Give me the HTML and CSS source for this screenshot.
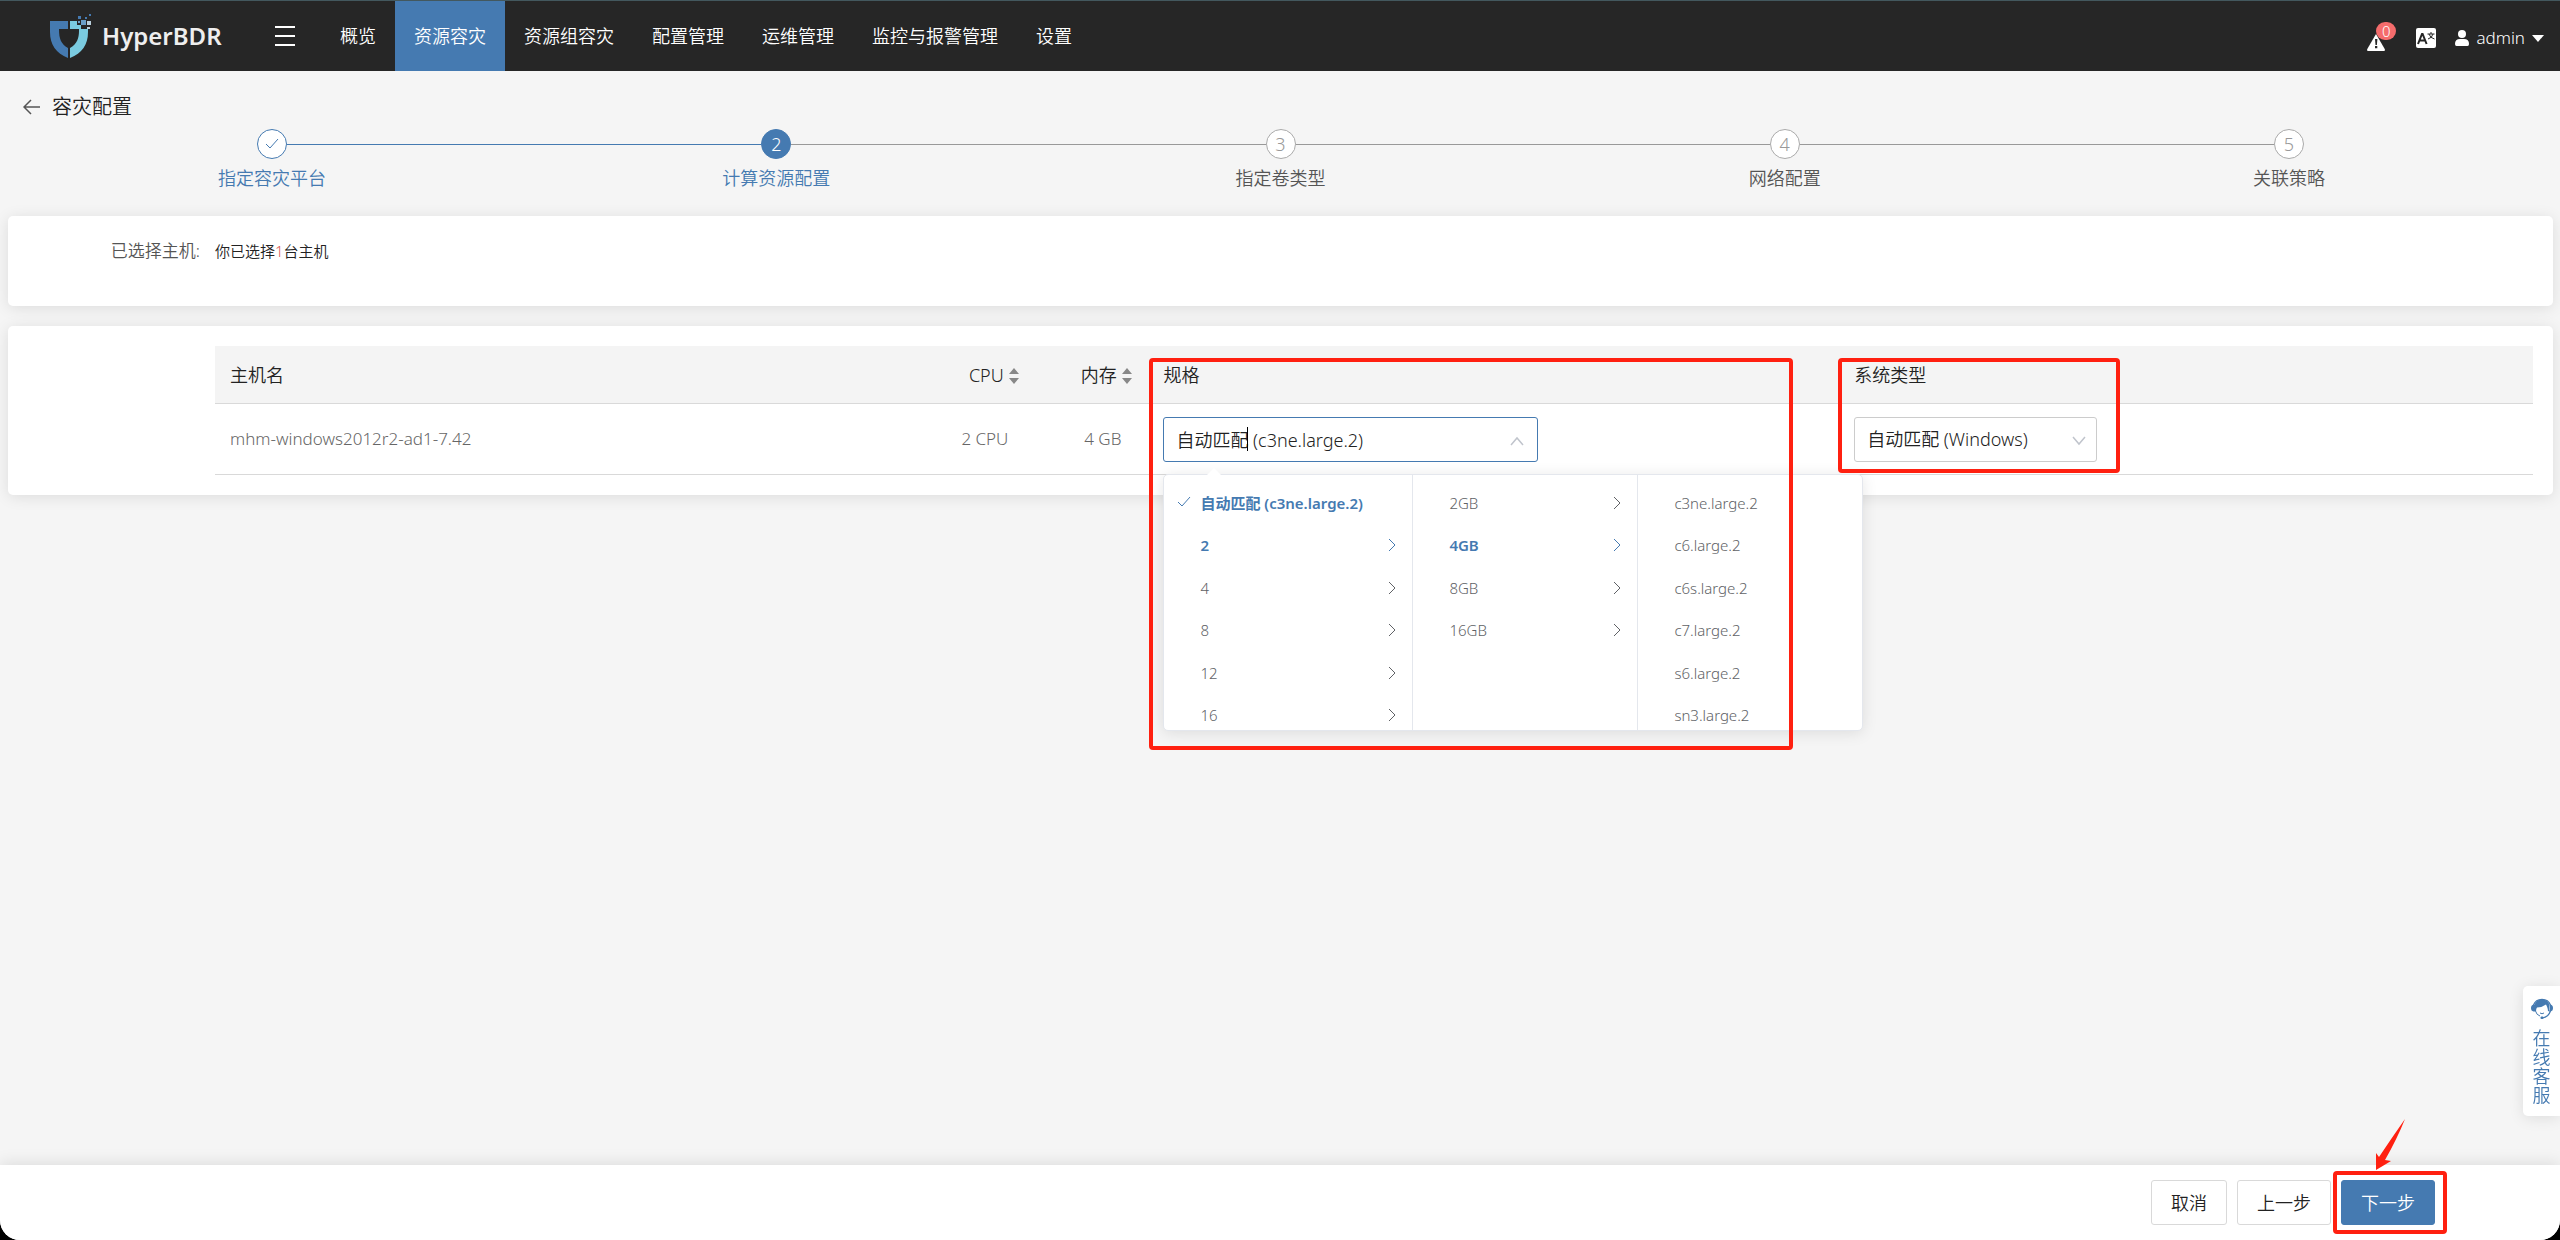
FILE: index.html
```html
<!DOCTYPE html>
<html lang="zh-CN">
<head>
<meta charset="utf-8">
<title>HyperBDR - 容灾配置</title>
<link rel="stylesheet" href="styles.css">
</head>
<body>
<svg class="sprite" aria-hidden="true">
  <symbol id="chev-right" viewBox="0 0 8 14"><path d="M1 1l6 6-6 6"/></symbol>
  <symbol id="chev-down" viewBox="0 0 14 10"><path d="M1 1l6 7 6-7"/></symbol>
  <symbol id="chev-up" viewBox="0 0 14 10"><path d="M1 9l6-7 6 7"/></symbol>
  <symbol id="check" viewBox="0 0 14 12"><path d="M1 6l4 4 8-9"/></symbol>
  <symbol id="sort" viewBox="0 0 10 16"><path d="M5 0l5 6H0zM5 16l5-6H0z"/></symbol>
</svg>
<div class="app">
  <header class="topbar">
    <a class="brand" href="#">
      <svg class="brand-mark" viewBox="0 0 42 44" aria-hidden="true">
        <path fill="#457ab1" d="M0 7h18v8H9c0 10 2 15 9 19v10C6 39 0 31 0 18z"/>
        <path fill="#7acbe0" d="M20 7h7v4h4v4h7v3c0 13-6 21-18 26V34c7-4 9-10 9-17v-2h-9z"/>
        <path fill="#457ab1" d="M28 2h3v3h-3zM35 3h2v2h-2zM39 0h2v2h-2z"/>
        <path fill="#6a9fc8" d="M31 6h5v5h-5zM28 7h2v2h-2z"/>
        <path fill="#b9cfdc" d="M37 7h4v4h-4zM37 13h3v2h-3z"/>
      </svg>
      <span class="brand-name">HyperBDR</span>
    </a>
    <button class="menu-toggle" type="button" aria-label="菜单"><i></i><i></i><i></i></button>
    <nav class="nav">
      <a href="#">概览</a>
      <a href="#" class="active">资源容灾</a>
      <a href="#">资源组容灾</a>
      <a href="#">配置管理</a>
      <a href="#">运维管理</a>
      <a href="#">监控与报警管理</a>
      <a href="#">设置</a>
    </nav>
    <div class="tools">
      <button class="alarm" type="button" aria-label="报警">
        <svg viewBox="0 0 18 17" width="18" height="17"><path fill="#fff" d="M9 0l9 15.500q0 1.500-1 1.500H1q-1 0-1-1.500z"/><path fill="#262626" d="M8 5h2.400l-.5 6H8.500zM8 12h2.300v2.200H8z"/></svg>
        <span class="badge">0</span>
      </button>
      <button class="lang" type="button" aria-label="语言">
        <svg viewBox="0 0 20 20" width="20" height="20"><rect width="20" height="20" rx="2" fill="#fff"/><g fill="none" stroke="#262626"><path stroke-width="2" d="M2 16L6 6h.6l4 10M3.500 12.500h6"/><path d="M11.500 6h7M15 4v2M12 11q4-1 5-5M13 6q1 4 5.500 5"/></g></svg>
      </button>
      <button class="user" type="button">
        <svg viewBox="0 0 14 16" width="14" height="16"><circle cx="7" cy="4" r="4" fill="#fff"/><path fill="#fff" d="M0 14q0-5 5-5h4q5 0 5 5 0 2-1.500 2h-11Q0 16 0 14z"/></svg>
        <span>admin</span>
        <svg class="user-caret" viewBox="0 0 12 7" width="12" height="7"><path fill="#fff" d="M0 0h12L6 7z"/></svg>
      </button>
    </div>
  </header>

  <main class="content">
    <div class="page-title">
      <a href="#" class="back" aria-label="返回"><svg viewBox="0 0 18 16" width="18" height="16"><path d="M17 8H1M8 1L1 8l7 7"/></svg></a>
      <h1>容灾配置</h1>
    </div>

    <ol class="steps">
      <li class="done"><span class="dot"><svg width="14" height="12"><use href="#check"/></svg></span><span class="step-label">指定容灾平台</span></li>
      <li class="current"><span class="dot">2</span><span class="step-label">计算资源配置</span></li>
      <li><span class="dot">3</span><span class="step-label">指定卷类型</span></li>
      <li><span class="dot">4</span><span class="step-label">网络配置</span></li>
      <li><span class="dot">5</span><span class="step-label">关联策略</span></li>
    </ol>

    <section class="card selected">
      <span class="field-label">已选择主机:</span>
      <span class="field-value">你已选择<em>1</em>台主机</span>
    </section>

    <section class="card hosts">
      <table>
        <colgroup><col class="c-name"><col class="c-num"><col class="c-num"><col class="c-spec"><col></colgroup>
        <thead>
          <tr>
            <th>主机名</th>
            <th class="num">CPU <svg width="10" height="16"><use href="#sort"/></svg></th>
            <th class="num">内存 <svg width="10" height="16"><use href="#sort"/></svg></th>
            <th class="ctl"><label for="spec">规格</label></th>
            <th class="ctl"><label for="os">系统类型</label></th>
          </tr>
        </thead>
        <tbody>
          <tr>
            <td>mhm-windows2012r2-ad1-7.42</td>
            <td class="num">2 CPU</td>
            <td class="num">4 GB</td>
            <td class="ctl">
              <div class="picker spec">
                <input id="spec" type="text" role="combobox" aria-expanded="true" aria-controls="spec-menu" value="自动匹配 (c3ne.large.2)">
                <span class="text-cursor"></span>
                <svg class="arrow" width="14" height="10"><use href="#chev-up"/></svg>
                <div class="menu" id="spec-menu">
                  <div class="menu-body">
                    <div class="menu-col first">
                      <button type="button" class="on"><svg class="tick" width="14" height="12"><use href="#check"/></svg>自动匹配 (c3ne.large.2)</button>
                      <button type="button" class="on">2<svg class="more" width="8" height="14"><use href="#chev-right"/></svg></button>
                      <button type="button">4<svg class="more" width="8" height="14"><use href="#chev-right"/></svg></button>
                      <button type="button">8<svg class="more" width="8" height="14"><use href="#chev-right"/></svg></button>
                      <button type="button">12<svg class="more" width="8" height="14"><use href="#chev-right"/></svg></button>
                      <button type="button">16<svg class="more" width="8" height="14"><use href="#chev-right"/></svg></button>
                    </div>
                    <div class="menu-col">
                      <button type="button">2GB<svg class="more" width="8" height="14"><use href="#chev-right"/></svg></button>
                      <button type="button" class="on">4GB<svg class="more" width="8" height="14"><use href="#chev-right"/></svg></button>
                      <button type="button">8GB<svg class="more" width="8" height="14"><use href="#chev-right"/></svg></button>
                      <button type="button">16GB<svg class="more" width="8" height="14"><use href="#chev-right"/></svg></button>
                    </div>
                    <div class="menu-col">
                      <button type="button">c3ne.large.2</button>
                      <button type="button">c6.large.2</button>
                      <button type="button">c6s.large.2</button>
                      <button type="button">c7.large.2</button>
                      <button type="button">s6.large.2</button>
                      <button type="button">sn3.large.2</button>
                    </div>
                  </div>
                </div>
                <span class="mark mark-spec"></span>
              </div>
            </td>
            <td class="ctl">
              <div class="picker os">
                <select id="os"><option>自动匹配 (Windows)</option></select>
                <svg class="arrow" width="14" height="10"><use href="#chev-down"/></svg>
                <span class="mark mark-os"></span>
              </div>
            </td>
          </tr>
        </tbody>
      </table>
    </section>
  </main>

  <footer class="actions">
    <button type="button" class="btn">取消</button>
    <button type="button" class="btn">上一步</button>
    <div class="next">
      <button type="button" class="btn primary">下一步</button>
      <span class="mark mark-next"></span>
      <svg class="pointer" viewBox="0 0 30 52" width="30" height="52" aria-hidden="true"><path fill="#ff2010" d="M29 0Q21 20 9 41l6 1L0 51V34l3 4Q15 20 29 0z"/></svg>
    </div>
  </footer>
</div>

<a class="support" href="#">
  <svg viewBox="0 0 22 22" width="22" height="22" aria-hidden="true">
    <path fill="none" stroke="#457ab1" stroke-width="1.200" d="M2.500 8a9 8.500 0 0 1 17 0M19.500 14q-2 6-8 7"/>
    <path fill="#457ab1" d="M11 2.500c5 0 7.500 3 7.500 7v4l-1.500 1c0-3-1-5-2-7q-4 3-9 3-1 1-1 4l-1.500-1v-4c0-4 2.500-7 7.500-7zM2.500 7.500h1.500v7H2.500Q0 14 0 11t2.500-3.500zM19.500 7.500H18v7h1.500q2.500-.5 2.500-3.500t-2.500-3.500z"/>
    <rect fill="#457ab1" x="9.500" y="19.500" width="3" height="2.500" rx="1"/>
    <path fill="none" stroke="#457ab1" d="M4.500 14q1 4 4.500 5M9 16q2 1.500 4 0"/>
  </svg>
  <span>在线客服</span>
</a>
</body>
</html>
```
FILE: styles.css
```css
* { box-sizing: border-box; }

:root {
  --blue: #457ab1;
  --line: #d9d9d9;
  --mark: #ff2010;
}

body {
  margin: 0;
  background: #000;
  color: #222;
  font: 350 18px/24px "Noto Sans", "Noto Sans CJK SC", sans-serif;
}

a { color: inherit; text-decoration: none; }
button, input, select { font: inherit; color: inherit; }
button { cursor: pointer; }
.sprite { display: none; }

.app {
  display: flex;
  flex-direction: column;
  min-height: 100vh;
  overflow: hidden;
  background: #f5f5f5;
  border-radius: 0 0 20px 20px;
}

/* Top bar */
.topbar {
  display: flex;
  align-items: stretch;
  height: 71px;
  padding: 0 16px 0 50px;
  border-top: 1px solid #43585e;
  background: #262626;
  color: #fff;
}
.brand { display: flex; align-items: center; gap: 10px; width: 225px; }
.brand-mark { width: 42px; height: 44px; }
.brand-name { color: #eee; font-size: 24px; font-weight: 600; }
.menu-toggle {
  display: flex;
  flex-direction: column;
  justify-content: center;
  gap: 7px;
  width: 46px;
  padding: 0;
  border: 0;
  background: none;
}
.menu-toggle i { width: 20px; height: 2px; background: #fff; }
.nav { display: flex; }
.nav a { display: flex; align-items: center; padding: 0 19px; }
.nav .active { background: var(--blue); }
.tools { display: flex; align-items: center; margin-left: auto; }
.tools button {
  display: flex;
  align-items: center;
  padding: 0;
  border: 0;
  background: none;
}
.tools .alarm { position: relative; margin-right: 31px; padding-top: 12px; }
.badge {
  position: absolute;
  left: 9px;
  top: 0;
  width: 20px;
  height: 18px;
  border-radius: 9px;
  background: #f56c6c;
  font-size: 15px;
  line-height: 18px;
  text-align: center;
}
.tools .lang { margin-right: 19px; padding-top: 4px; }
.tools .user { gap: 7px; padding-top: 4px; font-size: 17px; }

/* Heading and steps */
.content { flex: 1; padding: 26px 7px 0 8px; }
.page-title { display: flex; align-items: center; gap: 11px; height: 20px; padding-left: 15px; }
.page-title h1 { margin: 0; font-size: 20px; font-weight: inherit; line-height: 20px; }
.back { display: flex; }
.back svg { fill: none; stroke: #555; stroke-width: 1.5; }

.steps {
  display: flex;
  margin: 12px 12px 26px;
  padding: 0;
  list-style: none;
  color: #555;
}
.steps li {
  position: relative;
  display: flex;
  flex: 1;
  flex-direction: column;
  align-items: center;
  gap: 7px;
}
.steps li:not(:last-child)::after {
  content: "";
  position: absolute;
  top: 15px;
  left: calc(50% + 15px);
  width: calc(100% - 30px);
  height: 1px;
  background: #999;
}
.dot {
  display: flex;
  align-items: center;
  justify-content: center;
  width: 30px;
  height: 30px;
  border: 1px solid #aaa;
  border-radius: 50%;
  background: #fff;
  color: #999;
}
.steps .done, .steps .current { color: var(--blue); }
.steps .done::after { background: var(--blue) !important; }
.done .dot { border-color: var(--blue); }
.done .dot svg { fill: none; stroke: var(--blue); }
.current .dot { border-color: var(--blue); background: var(--blue); color: #fff; }

/* Cards */
.card {
  margin-bottom: 20px;
  border-radius: 5px;
  background: #fff;
  box-shadow: 0 2px 15px rgba(0, 0, 0, .1);
}
.selected { display: flex; gap: 15px; min-height: 90px; padding: 20px 0; line-height: 30px; }
.field-label { width: 192px; color: #555; font-size: 17px; text-align: right; }
.field-value { font-size: 15px; }
.field-value em { color: #d9534f; font-style: normal; }

.hosts { padding: 20px 20px 20px 207px; }
table { width: 100%; border-collapse: separate; border-spacing: 0; table-layout: fixed; }
th, td { padding: 0 15px; border-bottom: 1px solid var(--line); font-weight: inherit; text-align: left; }
th { height: 58px; background: #f4f4f4; }
td { height: 71px; color: #666; font-size: 17px; }
th svg { margin-left: 1px; fill: #888; vertical-align: -2px; }
.num { text-align: right; }
th.num { padding-right: 4px; }
th.ctl, td.ctl { padding-left: 27px; }
.c-name { width: 30%; }
.c-num { width: 113px; }
.c-spec { width: 29.8%; }

.picker { position: relative; color: #222; font-size: 18px; }
.spec { width: 375px; }
.os { width: 243px; }
.picker input, .picker select {
  display: block;
  width: 100%;
  height: 45px;
  padding: 0 12px;
  border: 1px solid #ccc;
  border-radius: 3px;
  outline: 0;
  background: #fff;
  appearance: none;
}
.picker input { border-color: var(--blue); }
.arrow {
  position: absolute;
  top: 19px;
  right: 14px;
  fill: none;
  stroke: #c0c4cc;
  stroke-width: 1.5;
  pointer-events: none;
}
.picker.os .arrow { right: 11px; }
.text-cursor { position: absolute; left: 84px; top: 10px; width: 1px; height: 24px; background: #000; }

/* Cascading menu */
.menu {
  position: absolute;
  z-index: 2;
  top: 57px;
  left: 0;
  border: 1px solid #e4e7ed;
  border-radius: 5px;
  background: #fff;
  box-shadow: 0 2px 15px rgba(0, 0, 0, .1);
}
.menu::before {
  content: "";
  position: absolute;
  top: -7px;
  left: 43px;
  border: 7px solid transparent;
  border-top: 0;
  border-bottom-color: #fff;
}
.menu-body { display: flex; height: 255px; overflow: hidden; }
.menu-col {
  display: grid;
  grid-template-rows: repeat(6, 1fr);
  width: 225px;
  height: 262px;
  padding-top: 7px;
  border-left: 1px solid #e4e7ed;
}
.menu-col.first { width: 248px; border-left: 0; }
.menu-col button {
  position: relative;
  padding: 0 36px;
  border: 0;
  background: none;
  color: #606266;
  font-size: 15px;
  text-align: left;
}
.menu-col .on { color: var(--blue); font-weight: 600; }
.menu-col svg { position: absolute; top: calc(50% - 7px); fill: none; stroke: currentColor; }
.more { right: 16px; }
.tick { left: 13px; }

/* Callout frames */
.mark {
  position: absolute;
  z-index: 3;
  border: 4px solid var(--mark);
  border-radius: 4px;
  pointer-events: none;
}
.mark-spec { left: -14px; top: -59px; width: 644px; height: 392px; }
.mark-os { left: -16px; top: -59px; width: 282px; height: 115px; }
.mark-next { left: -8px; top: -9px; width: 114px; height: 63px; }

/* Footer */
.actions {
  display: flex;
  justify-content: flex-end;
  gap: 10px;
  height: 75px;
  padding: 15px 125px 15px 20px;
  background: #fff;
  box-shadow: 0 -2px 15px rgba(0, 0, 0, .1);
}
.btn {
  height: 45px;
  padding: 0 19px;
  border: 1px solid var(--line);
  border-radius: 3px;
  background: #fff;
}
.btn.primary { border-color: var(--blue); background: var(--blue); color: #fff; }
.next { position: relative; }
.pointer { position: absolute; left: 35px; top: -61px; z-index: 3; }

.support {
  position: fixed;
  right: 0;
  bottom: 124px;
  display: flex;
  flex-direction: column;
  align-items: center;
  gap: 10px;
  width: 37px;
  height: 130px;
  padding-top: 11px;
  border-radius: 5px 0 0 5px;
  background: #fff;
  box-shadow: 0 2px 15px rgba(0, 0, 0, .1);
  color: var(--blue);
  line-height: 19px;
}
.support span { width: 18px; }
```
